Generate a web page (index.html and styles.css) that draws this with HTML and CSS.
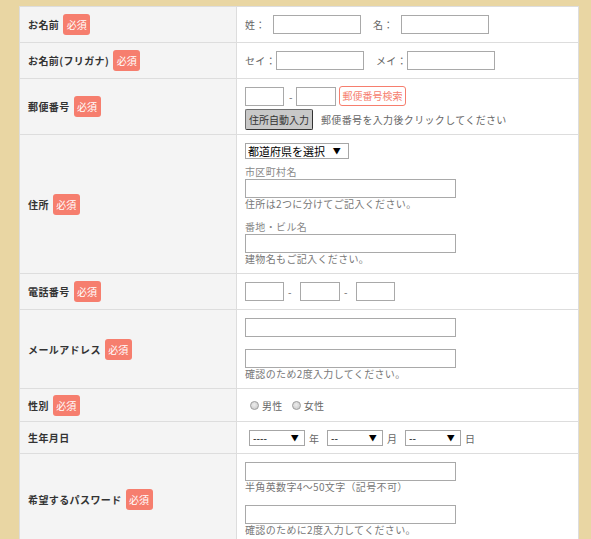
FILE: index.html
```html
<!DOCTYPE html>
<html lang="ja">
<head>
<meta charset="utf-8">
<title>会員登録フォーム</title>
<link rel="stylesheet" href="styles.css">
</head>
<body>
<div class="wrap">
<table class="form">
  <colgroup><col class="c-label"><col class="c-field"></colgroup>
  <tr>
    <th><div class="th-in"><span>お名前</span><span class="req">必須</span></div></th>
    <td><div class="row h19">
      <span class="pre w28">姓：</span><input class="t name" type="text">
      <span class="pre w28 ml12">名：</span><input class="t name" type="text">
    </div></td>
  </tr>
  <tr>
    <th><div class="th-in"><span>お名前(フリガナ)</span><span class="req">必須</span></div></th>
    <td><div class="row h19">
      <span class="pre w31">セイ：</span><input class="t name" type="text">
      <span class="pre w31 ml12">メイ：</span><input class="t name" type="text">
    </div></td>
  </tr>
  <tr>
    <th><div class="th-in"><span>郵便番号</span><span class="req">必須</span></div></th>
    <td class="zip-cell">
      <div class="row h20">
        <input class="t zip1" type="text"><span class="dash dz">-</span><input class="t zip2" type="text">
        <button class="zbtn" type="button">郵便番号検索</button>
      </div>
      <div class="row h21 mt3">
        <button class="abtn" type="button">住所自動入力</button>
        <span class="hint">郵便番号を入力後クリックしてください</span>
      </div>
    </td>
  </tr>
  <tr>
    <th><div class="th-in"><span>住所</span><span class="req">必須</span></div></th>
    <td>
      <div class="col">
        <span class="sel pref"><select><option>都道府県を選択</option></select></span>
        <div class="sub">市区町村名</div>
        <input class="t wide after-sub" type="text">
        <div class="note">住所は2つに分けてご記入ください。</div>
        <div class="sub second">番地・ビル名</div>
        <input class="t wide after-sub" type="text">
        <div class="note">建物名もご記入ください。</div>
      </div>
    </td>
  </tr>
  <tr>
    <th><div class="th-in"><span>電話番号</span><span class="req">必須</span></div></th>
    <td><div class="row h19">
      <input class="t tel1" type="text"><span class="dash dt">-</span><input class="t tel2" type="text"><span class="dash dt">-</span><input class="t tel3" type="text">
    </div></td>
  </tr>
  <tr>
    <th><div class="th-in"><span>メールアドレス</span><span class="req">必須</span></div></th>
    <td>
      <div class="col">
        <input class="t wide" type="text">
        <input class="t wide mt12" type="text">
        <div class="note">確認のため2度入力してください。</div>
      </div>
    </td>
  </tr>
  <tr>
    <th><div class="th-in"><span>性別</span><span class="req">必須</span></div></th>
    <td><div class="row h16">
      <label class="rad first"><input type="radio" name="sex"><span>男性</span></label>
      <label class="rad"><input type="radio" name="sex"><span>女性</span></label>
    </div></td>
  </tr>
  <tr>
    <th><div class="th-in"><span>生年月日</span></div></th>
    <td class="date-cell"><div class="row h16">
      <span class="sel date first"><select><option>----</option></select></span><span class="unit">年</span>
      <span class="sel date"><select><option>--</option></select></span><span class="unit">月</span>
      <span class="sel date"><select><option>--</option></select></span><span class="unit">日</span>
    </div></td>
  </tr>
  <tr>
    <th><div class="th-in"><span>希望するパスワード</span><span class="req">必須</span></div></th>
    <td>
      <div class="col">
        <input class="t wide" type="password">
        <div class="note">半角英数字4～50文字（記号不可）</div>
        <input class="t wide mt12" type="password">
        <div class="note">確認のために2度入力してください。</div>
      </div>
    </td>
  </tr>
</table>
</div>
</body>
</html>
```
FILE: styles.css
```css
html, body {
  margin: 0;
  padding: 0;
}
body {
  background: #e9d6a3;
  font-family: "Noto Sans CJK JP", "Noto Sans", sans-serif;
  font-size: 10px;
  color: #666;
  height: 539px;
  overflow: hidden;
}
.wrap {
  padding: 6px 13px 0 19px;
}
table.form {
  border-collapse: collapse;
  table-layout: fixed;
  width: 560px;
}
col.c-label {
  width: 217px;
}
th, td {
  border: 1px solid #dddddd;
  text-align: left;
  vertical-align: middle;
}
th {
  background: #f4f4f4;
  padding: 0 8px;
  font-weight: bold;
  color: #333;
  font-size: 10px;
  letter-spacing: 0.4px;
}
td {
  background: #fff;
  padding: 8px;
  letter-spacing: 0.35px;
}
.th-in {
  display: flex;
  align-items: center;
}
.req {
  display: inline-block;
  background: #f67e6e;
  color: #fff;
  border-radius: 3px;
  height: 21px;
  line-height: 21px;
  padding: 0 3.5px;
  margin-left: 4px;
  font-weight: normal;
  letter-spacing: 0;
}
.row {
  display: flex;
  align-items: center;
}
.h16 { height: 16px; }
.h19 { height: 19px; }
.h20 { height: 20px; }
.h21 { height: 21px; }
.mt3 { margin-top: 3px; }
.ml12 { margin-left: 12px; }
.pre {
  color: #666;
  white-space: nowrap;
}
.w28 { width: 28px; }
.w31 { width: 31px; }

input.t {
  box-sizing: border-box;
  height: 19px;
  border: 1px solid #a9a9a9;
  border-radius: 0;
  padding: 0 2px;
  margin: 0;
  background: #fff;
  font: inherit;
  flex: none;
}
input.t.mt12 { margin-top: 12px; }
input.t.after-sub { margin-top: 1px; }
.name { width: 88px; }
.zip1 { width: 39px; }
.zip2 { width: 40px; }
.tel1 { width: 39px; }
.tel2 { width: 40px; }
.tel3 { width: 39px; }
.wide { width: 211px; }

.dash {
  color: #666;
  display: inline-block;
  line-height: 19px;
}
.dz { width: 12px; padding-left: 5px; box-sizing: border-box; }
.dt { width: 16px; padding-left: 4px; box-sizing: border-box; }

.zip-cell {
  padding: 7px 8px 4px;
}
.zbtn {
  box-sizing: border-box;
  height: 20px;
  width: 67px;
  margin: 0 0 0 3px;
  padding: 0;
  border: 1px solid #f67e6e;
  border-radius: 3px;
  background: #fff;
  color: #f67e6e;
  font: 10px "Noto Sans CJK JP", sans-serif;
  line-height: 18px;
}
.abtn {
  box-sizing: border-box;
  height: 21px;
  width: 68px;
  margin: 0;
  padding: 0;
  border: 1px solid #6e6e6e;
  border-right-color: #333;
  border-bottom-color: #333;
  border-radius: 2px;
  background: #c8c8c8;
  color: #333;
  font: 10px "Noto Sans CJK JP", sans-serif;
  line-height: 19px;
}
.hint {
  margin-left: 8px;
  color: #666;
}

.col {
  display: flex;
  flex-direction: column;
  align-items: flex-start;
}
.sub {
  margin-top: 7px;
  line-height: 12px;
  color: #888;
}
.sub.second {
  margin-top: 11px;
}
.note {
  line-height: 12px;
  color: #777;
}

.sel {
  position: relative;
  display: inline-block;
  height: 16px;
  flex: none;
}
.sel select {
  -webkit-appearance: none;
  appearance: none;
  box-sizing: border-box;
  height: 16px;
  border: 1px solid #a6a6a6;
  border-radius: 0;
  background: #fff;
  color: #000;
  font: 11px "Noto Sans CJK JP", sans-serif;
  line-height: 14px;
  padding: 0 0 0 2px;
  margin: 0;
  display: block;
}
.sel::after {
  content: "▼";
  position: absolute;
  top: 0;
  right: 8px;
  line-height: 16px;
  font-size: 8px;
  color: #000;
  pointer-events: none;
}
.pref select { width: 104px; }
.date select {
  width: 56px;
  font-size: 10px;
  padding-left: 3px;
}
.date::after { right: 6px; }
.date.first { margin-left: 4px; }
.unit {
  color: #666;
  margin-left: 4px;
  width: 10px;
  margin-right: 8px;
}
.date-cell {
  padding: 8px 8px 7px;
}

.rad {
  display: inline-flex;
  align-items: center;
  color: #666;
  margin-left: 9px;
}
.rad.first { margin-left: 5px; }
.rad input {
  -webkit-appearance: none;
  appearance: none;
  box-sizing: border-box;
  width: 9px;
  height: 9px;
  margin: 0 3px 0 0;
  border-radius: 50%;
  border: 1px solid #a0a0a0;
  background: radial-gradient(circle at 45% 40%, #eeeeee 0%, #c4c4c4 100%);
}
```
